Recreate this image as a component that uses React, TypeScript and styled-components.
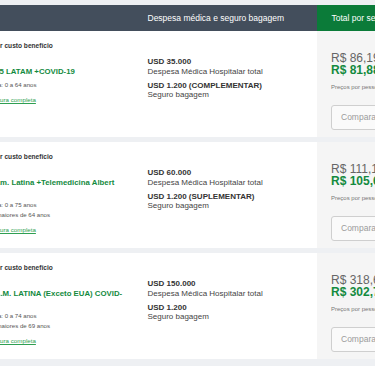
import React from "react";
import styled, { createGlobalStyle } from "styled-components";

const GlobalStyle = createGlobalStyle`
  html, body { margin: 0; padding: 0; background: #eef0f3; }
  body { font-family: "Liberation Sans", Arial, sans-serif; }
`;

const Viewport = styled.div`
  width: 375px;
  height: 366px;
  overflow: hidden;
  padding-top: 5px;
  box-sizing: border-box;
  background: #eef0f3;
`;

const Table = styled.div`
  margin-left: -36px;
  width: 560px;
  display: flex;
  flex-direction: column;
`;

const Grid = styled.div`
  display: grid;
  grid-template-columns: 176px 177px 207px;
`;

const HeaderRow = styled(Grid)`
  height: 26px;
`;

const HeaderCell = styled.div<{ $tone: "dark" | "green" }>`
  background: ${(p) => (p.$tone === "green" ? "#0b7b39" : "#434e5c")};
  color: #ffffff;
  font-size: 8.5px;
  display: flex;
  align-items: center;
  padding-left: ${(p) => (p.$tone === "green" ? "14.5px" : "7.5px")};
`;

const Rows = styled.div`
  display: flex;
  flex-direction: column;
  gap: 5px;
`;

const Card = styled(Grid)`
  height: 106px;
  background: #ffffff;
`;

const PlanCell = styled.div`
  padding: 9px 10px 0 0;
  display: flex;
  flex-direction: column;
  align-items: flex-start;
`;

const Badge = styled.div`
  display: inline-flex;
  align-items: center;
  gap: 5px;
  font-size: 6.6px;
  line-height: 10px;
  font-weight: 700;
  color: #333333;
  white-space: nowrap;
`;

const Title = styled.div`
  margin-top: 15px;
  font-size: 7.8px;
  line-height: 9px;
  font-weight: 700;
  color: #138a3e;
`;

const Ages = styled.div`
  margin-top: 3.5px;
  font-size: 6.1px;
  line-height: 10px;
  color: #555555;
  white-space: nowrap;
`;

const Link = styled.a`
  margin-top: 5.5px;
  font-size: 6.2px;
  line-height: 10px;
  color: #2f9f52;
  text-decoration: underline;
  white-space: nowrap;
`;

const CoverCell = styled.div`
  padding: 26px 0 0 7.5px;
  display: flex;
  flex-direction: column;
  gap: 4.5px;
`;

const Cover = styled.div`
  font-size: 8px;
  line-height: 9.5px;
  color: #444444;
  white-space: nowrap;
`;

const CoverValue = styled.div`
  font-weight: 700;
  color: #333333;
`;

const PriceCell = styled.div`
  background: #f5f5f5;
  padding: 20.5px 0 0 14px;
  display: flex;
  flex-direction: column;
  align-items: flex-start;
  white-space: nowrap;
`;

const OldPrice = styled.div`
  font-size: 12px;
  line-height: 12.5px;
  color: #666666;
`;

const NewPrice = styled.div`
  font-size: 12px;
  line-height: 12.5px;
  font-weight: 700;
  color: #138a3e;
`;

const PriceNote = styled.div`
  margin-top: 6px;
  font-size: 6px;
  line-height: 8px;
  color: #777777;
`;

const CompareButton = styled.button`
  margin-top: 14px;
  width: 110px;
  height: 25px;
  box-sizing: border-box;
  border: 1px solid #cfcfcf;
  border-radius: 3px;
  background: #fafafa;
  color: #9a9a9a;
  font-family: inherit;
  font-size: 8.5px;
  text-align: left;
  padding: 0 0 0 9px;
`;

const Medal = () => (
  <svg width="12" height="12" viewBox="0 0 12 12" aria-hidden="true">
    <circle cx="6" cy="6" r="5" fill="#138a3e" />
  </svg>
);

type Plan = {
  title: React.ReactNode;
  ages: string[];
  medical: string;
  baggage: string;
  oldPrice: string;
  newPrice: string;
};

const plans: Plan[] = [
  {
    title: "Premier 35 LATAM +COVID-19",
    ages: ["Idade coberta: 0 a 64 anos"],
    medical: "USD 35.000",
    baggage: "USD 1.200 (COMPLEMENTAR)",
    oldPrice: "R$ 86,19",
    newPrice: "R$ 81,88",
  },
  {
    title: "Start 60 Am. Latina +Telemedicina Albert Einstein",
    ages: ["Idade coberta: 0 a 75 anos", "Reajuste p/ maiores de 64 anos"],
    medical: "USD 60.000",
    baggage: "USD 1.200 (SUPLEMENTAR)",
    oldPrice: "R$ 111,18",
    newPrice: "R$ 105,62",
  },
  {
    title: (
      <>
        Top 150 A.M. LATINA (Exceto EUA) COVID-<wbr />19
      </>
    ),
    ages: ["Idade coberta: 0 a 74 anos", "Reajuste p/ maiores de 69 anos"],
    medical: "USD 150.000",
    baggage: "USD 1.200",
    oldPrice: "R$ 318,69",
    newPrice: "R$ 302,76",
  },
];

export default function App() {
  return (
    <>
      <GlobalStyle />
      <Viewport>
        <Table>
          <HeaderRow>
            <HeaderCell $tone="dark" />
            <HeaderCell $tone="dark">Despesa médica e seguro bagagem</HeaderCell>
            <HeaderCell $tone="green">Total por seguro</HeaderCell>
          </HeaderRow>
          <Rows>
            {plans.map((p, i) => (
              <Card key={i}>
                <PlanCell>
                  <Badge>
                    <Medal />
                    Melhor custo benefício
                  </Badge>
                  <Title>{p.title}</Title>
                  <Ages>
                    {p.ages.map((a) => (
                      <div key={a}>{a}</div>
                    ))}
                  </Ages>
                  <Link href="#">Veja a cobertura completa</Link>
                </PlanCell>
                <CoverCell>
                  <Cover>
                    <CoverValue>{p.medical}</CoverValue>
                    Despesa Médica Hospitalar total
                  </Cover>
                  <Cover>
                    <CoverValue>{p.baggage}</CoverValue>
                    Seguro bagagem
                  </Cover>
                </CoverCell>
                <PriceCell>
                  <OldPrice>{p.oldPrice}</OldPrice>
                  <NewPrice>{p.newPrice}</NewPrice>
                  <PriceNote>Preços por pessoa</PriceNote>
                  <CompareButton>Comparar</CompareButton>
                </PriceCell>
              </Card>
            ))}
          </Rows>
        </Table>
      </Viewport>
    </>
  );
}
